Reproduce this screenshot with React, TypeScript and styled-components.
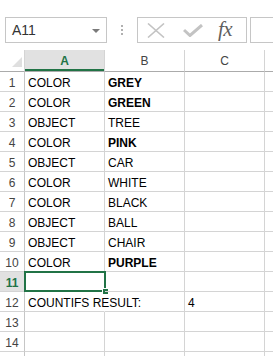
import React from "react";
import styled, { createGlobalStyle } from "styled-components";

const GlobalStyle = createGlobalStyle`
  html, body {
    margin: 0;
    padding: 0;
    background: #fff;
    overflow: hidden;
  }
  body {
    font-family: "Liberation Sans", Arial, sans-serif;
  }
`;

const GREEN = "#217346";
const GRID = "#d4d4d4";
const HEAD_LINE = "#ababab";

const Page = styled.div`
  width: 273px;
  height: 356px;
  overflow: hidden;
`;

const Toolbar = styled.div`
  display: flex;
  align-items: center;
  height: 26px;
  padding: 17px 0 0 5px;
  margin-bottom: 7px;
`;

const NameBox = styled.div`
  display: flex;
  align-items: center;
  justify-content: space-between;
  box-sizing: border-box;
  width: 102px;
  height: 26px;
  border: 1px solid #c6c6c6;
  padding: 0 6px 0 6px;
  font-size: 14px;
  color: #333;
  flex-shrink: 0;
`;

const DropArrow = styled.span`
  width: 0;
  height: 0;
  border-left: 4px solid transparent;
  border-right: 4px solid transparent;
  border-top: 4px solid #7a7a7a;
  margin-top: 1px;
`;

const Dots = styled.div`
  display: flex;
  flex-direction: column;
  gap: 2px;
  margin: 0 14px 0 14px;
  span {
    width: 2px;
    height: 2px;
    background: #b0b0b0;
  }
`;

const FormulaButtons = styled.div`
  display: flex;
  align-items: center;
  box-sizing: border-box;
  width: 110px;
  height: 26px;
  border: 1px solid #c6c6c6;
  padding-left: 9px;
  flex-shrink: 0;
`;

const IconSlot = styled.span<{ $w: number }>`
  display: flex;
  align-items: center;
  width: ${({ $w }) => $w}px;
`;

const Fx = styled.span`
  font-family: "Liberation Serif", "Times New Roman", serif;
  font-style: italic;
  font-size: 21px;
  color: #5f5f5f;
  line-height: 20px;
  letter-spacing: -0.5px;
  margin-top: -2px;
`;

const FormulaBar = styled.div`
  box-sizing: border-box;
  width: 120px;
  height: 26px;
  margin-left: 3px;
  border: 1px solid #c6c6c6;
  flex-shrink: 0;
`;

const Sheet = styled.div`
  display: grid;
  grid-template-columns: 25px 80px 80px 80px 80px;
`;

const Corner = styled.div`
  height: 22px;
  box-sizing: border-box;
  border-right: 1px solid ${GRID};
  border-bottom: 1px solid ${HEAD_LINE};
  position: relative;
  &::after {
    content: "";
    position: absolute;
    right: 2px;
    bottom: 4px;
    width: 0;
    height: 0;
    border-left: 10px solid transparent;
    border-bottom: 10px solid #dfdfdf;
  }
`;

const ColHeader = styled.div<{ $active?: boolean }>`
  height: 22px;
  box-sizing: border-box;
  border-right: 1px solid ${GRID};
  border-bottom: 1px solid ${HEAD_LINE};
  background: ${({ $active }) => ($active ? "#e1e1e1" : "#fff")};
  box-shadow: ${({ $active }) => ($active ? `inset 0 -2px 0 ${GREEN}` : "none")};
  color: ${({ $active }) => ($active ? GREEN : "#444")};
  font-weight: ${({ $active }) => ($active ? "bold" : "normal")};
  font-size: 12px;
  line-height: 15px;
  padding-top: 4px;
  text-align: center;
`;

const RowHeader = styled.div<{ $active?: boolean }>`
  height: 20px;
  box-sizing: border-box;
  border-right: 1px solid #c6c6c6;
  border-bottom: 1px solid ${GRID};
  background: ${({ $active }) => ($active ? "#e1e1e1" : "#fff")};
  color: ${({ $active }) => ($active ? GREEN : "#444")};
  font-weight: ${({ $active }) => ($active ? "bold" : "normal")};
  font-size: 12px;
  line-height: 15px;
  padding-top: 4px;
  text-align: center;
`;

const Cell = styled.div<{ $bold?: boolean; $spill?: boolean }>`
  height: 20px;
  box-sizing: border-box;
  border-right: 1px solid ${({ $spill }) => ($spill ? "transparent" : GRID)};
  border-bottom: 1px solid ${GRID};
  padding: 4px 0 0 3px;
  font-size: 12px;
  line-height: 15px;
  color: #000;
  font-weight: ${({ $bold }) => ($bold ? "bold" : "normal")};
  white-space: nowrap;
  position: relative;
  z-index: ${({ $spill }) => ($spill ? 1 : 0)};
`;

const Selection = styled.div`
  position: absolute;
  top: -1px;
  left: -1px;
  width: 82px;
  height: 21px;
  box-sizing: border-box;
  border: 2px solid ${GREEN};
  z-index: 2;
`;

const Handle = styled.div`
  position: absolute;
  left: 77px;
  top: 16px;
  width: 7px;
  height: 7px;
  box-sizing: border-box;
  background: ${GREEN};
  border: 1px solid #fff;
  z-index: 3;
`;

type Row = { a?: string; b?: string; c?: string; bold?: boolean };

const rows: Row[] = [
  { a: "COLOR", b: "GREY", bold: true },
  { a: "COLOR", b: "GREEN", bold: true },
  { a: "OBJECT", b: "TREE" },
  { a: "COLOR", b: "PINK", bold: true },
  { a: "OBJECT", b: "CAR" },
  { a: "COLOR", b: "WHITE" },
  { a: "COLOR", b: "BLACK" },
  { a: "OBJECT", b: "BALL" },
  { a: "OBJECT", b: "CHAIR" },
  { a: "COLOR", b: "PURPLE", bold: true },
  {},
  { a: "COUNTIFS RESULT:", c: "4" },
  {},
  {},
];

const App = () => {
  return (
    <Page>
      <GlobalStyle />
      <Toolbar>
        <NameBox>
          <span>A11</span>
          <DropArrow />
        </NameBox>
        <Dots>
          <span />
          <span />
          <span />
        </Dots>
        <FormulaButtons>
          <IconSlot $w={36}>
            <svg width="18" height="15" viewBox="0 0 18 15">
              <path d="M1 0.5 L17 14.5 M17 0.5 L1 14.5" stroke="#c3c3c3" strokeWidth="1.6" fill="none" />
            </svg>
          </IconSlot>
          <IconSlot $w={35}>
            <svg width="20" height="13" viewBox="0 0 20 13">
              <path d="M1 6 L7 11.5 L19 1" stroke="#c3c3c3" strokeWidth="3" fill="none" />
            </svg>
          </IconSlot>
          <Fx>fx</Fx>
        </FormulaButtons>
        <FormulaBar />
      </Toolbar>
      <Sheet>
        <Corner />
        <ColHeader $active>A</ColHeader>
        <ColHeader>B</ColHeader>
        <ColHeader>C</ColHeader>
        <ColHeader />
        {rows.map((r, i) => {
          const n = i + 1;
          const selected = n === 11;
          return (
            <React.Fragment key={n}>
              <RowHeader $active={selected}>{n}</RowHeader>
              <Cell $spill={n === 12}>
                {r.a}
                {selected && (
                  <>
                    <Selection />
                    <Handle />
                  </>
                )}
              </Cell>
              <Cell $bold={r.bold}>{r.b}</Cell>
              <Cell>{r.c}</Cell>
              <Cell />
            </React.Fragment>
          );
        })}
        <RowHeader />
        <Cell />
        <Cell />
        <Cell />
        <Cell />
      </Sheet>
    </Page>
  );
};

export default App;
